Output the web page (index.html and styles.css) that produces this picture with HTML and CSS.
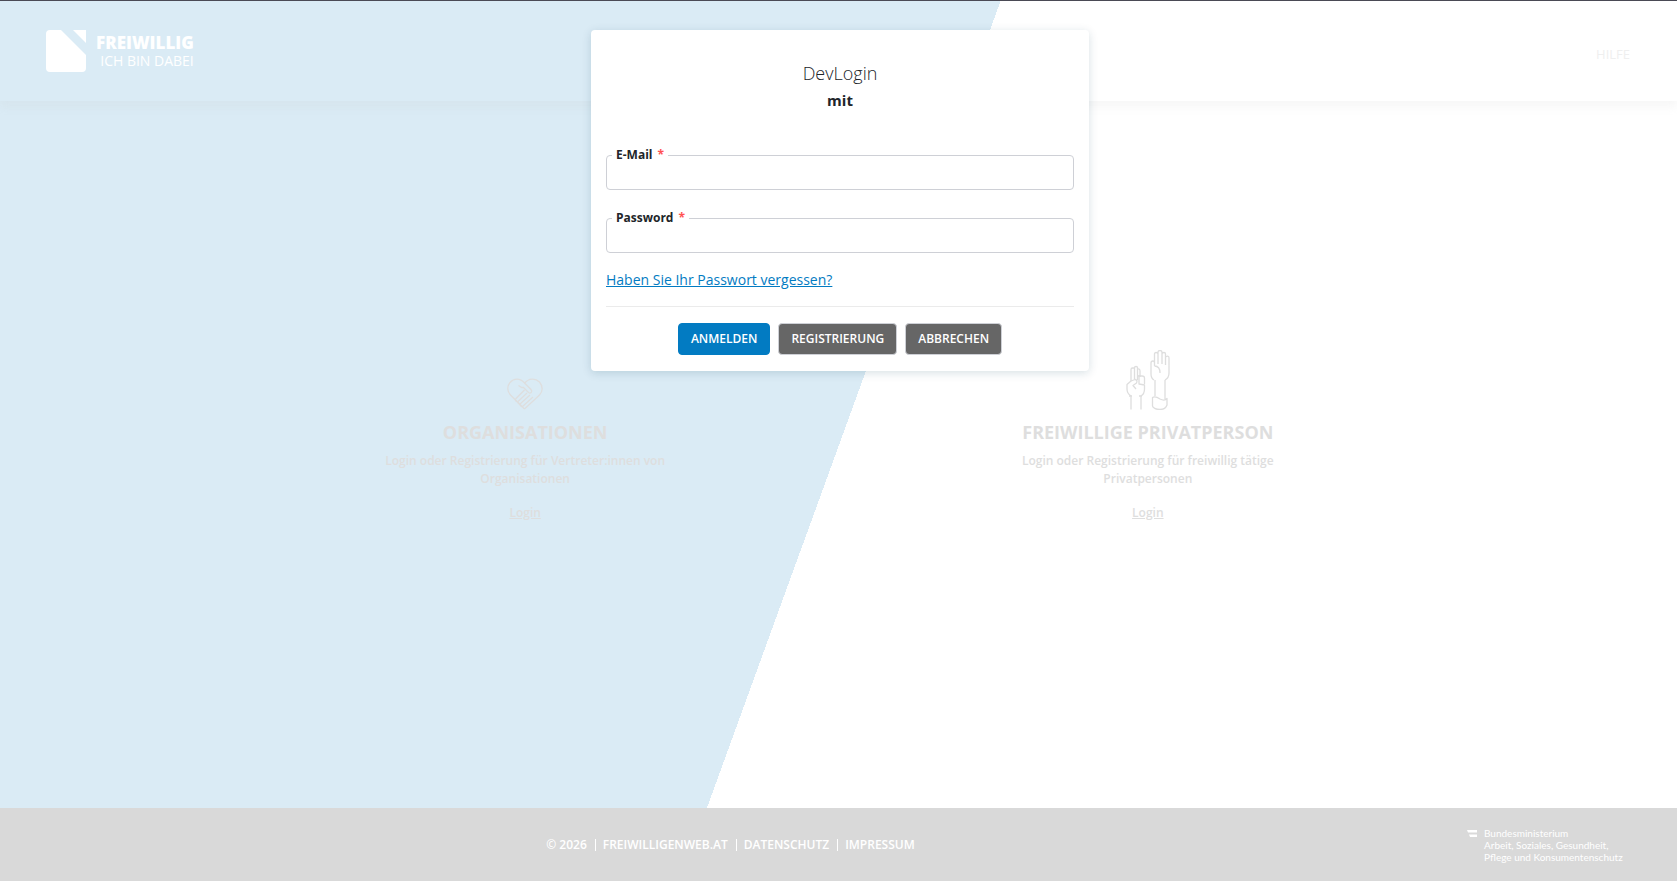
FILE: index.html
```
<!DOCTYPE html>
<html lang="de">
<head>
    <meta charset="UTF-8">
    <meta name="viewport" content="width=device-width, initial-scale=1.0">
    <title>Freiwillig - Login</title>
    <link rel="stylesheet" href="styles.css">
</head>
<body>
    <header class="header">
        <a class="logo" href="#">
            <svg class="logo-mark" width="40" height="42" viewBox="0 0 40 42" fill="#fff">
                <path d="M4 0H15L40 25V38Q40 42 36 42H4Q0 42 0 38V4Q0 0 4 0Z"/>
                <path d="M27 0H40V13Z"/>
            </svg>
            <span class="logo-text">
                <strong>FREIWILLIG</strong>
                <span>ICH BIN DABEI</span>
            </span>
        </a>
        <a class="help" href="#">HILFE</a>
    </header>

    <main class="main">
        <section class="choice">
            <svg class="choice-icon" width="36" height="32" viewBox="0 0 36 32">
                <path d="M17.500 31L3.500 17C0 13.500 0 8 3 4.500C7 0 13 0 17.500 5C22 0 28.500 0 32.500 4C36 8 36 13.500 32.500 17L17.500 31"/>
                <path d="M17.500 5L24 11.500C26 14 23.500 16 21.500 14.500L16.500 9.500L14.500 9.500L11.500 7.500"/>
                <path d="M8.500 21L17.500 12M11 23.500L20 15M13 26L23 17M15.500 28.500L26 19M8.500 21C8 22.500 9.500 24 11 23.500C11 25 12 26 13 26C13 27.500 14 28.500 15.500 28.500"/>
            </svg>
            <h2>ORGANISATIONEN</h2>
            <p>Login oder Registrierung für Vertreter:innen von Organisationen</p>
            <a href="#">Login</a>
        </section>
        <section class="choice">
            <svg class="choice-icon" width="44" height="60" viewBox="0 0 44 60">
                <path d="M5 59.500V46C2.500 44.500 1 42 1 39V34.500L5 31V19.500Q5 18 6.500 18H8.500V17.500Q8.500 16.500 10 16.500Q11.500 16.500 11.500 17.500V30"/>
                <path d="M8.500 18V29M11.500 19Q14 18.500 14 21V27M12 26H16Q18.500 26 18.500 28V34M13 25V34L18.500 35V39C18.500 42 17.500 44.500 15 46V59.500"/>
                <path d="M5 31L9 29.500Q12 30 10.500 33L7 35.500L10 39M3 46H6M13 46H16"/>
                <path d="M28 30C25.500 28.500 25 26 25 24V13Q25 11 27 11Q28.500 11 28.500 13V16M28.500 16V4Q28.500 2.500 30 2.500Q32 2.500 32 4V14M32 4V2.500Q32 .5 34 .5Q36 .5 36 2.500V14M36 4Q36 2.500 38 2.500Q39.500 2.500 39.500 4V15M39.500 7Q43 5 43 8V23C43 26 42 28.500 39 30M28.500 16C32 16 34 19 34 23"/>
                <path d="M29 30V46M39 30V49M26.500 47.500C29 46 31 47 34 49C37 50.500 39 51 41 48.500V55C40 58 37 59.500 34 59.500C30 59.500 26.500 57.500 26.500 56Z"/>
            </svg>
            <h2>FREIWILLIGE PRIVATPERSON</h2>
            <p>Login oder Registrierung für freiwillig tätige Privatpersonen</p>
            <a href="#">Login</a>
        </section>
    </main>

    <footer class="footer">
        <nav class="footer-links">
            <span>© 2026</span>
            <a href="#">FREIWILLIGENWEB.AT</a>
            <a href="#">DATENSCHUTZ</a>
            <a href="#">IMPRESSUM</a>
        </nav>
        <div class="ministry">
            <svg width="10" height="7" viewBox="0 0 10 7" fill="#fff">
                <path d="M0 0H10V2.500H1ZM2 4.500H10V7H3Z"/>
            </svg>
            <p>Bundesministerium<br>Arbeit, Soziales, Gesundheit,<br>Pflege und Konsumentenschutz</p>
        </div>
    </footer>

    <div class="overlay">
        <form class="dialog" role="dialog" aria-labelledby="dialog-title">
            <h1 id="dialog-title">DevLogin</h1>
            <p class="subtitle">mit</p>
            <div class="field">
                <label for="email">E-Mail <span class="required">*</span></label>
                <input type="email" id="email" required>
            </div>
            <div class="field">
                <label for="password">Password <span class="required">*</span></label>
                <input type="password" id="password" required>
            </div>
            <a class="forgot" href="#">Haben Sie Ihr Passwort vergessen?</a>
            <div class="buttons">
                <button type="submit" class="primary">ANMELDEN</button>
                <button type="button">REGISTRIERUNG</button>
                <button type="button">ABBRECHEN</button>
            </div>
        </form>
    </div>
</body>
</html>
```
FILE: styles.css
```
* {
    box-sizing: border-box;
}
body {
    margin: 0;
    min-height: 100vh;
    display: flex;
    flex-direction: column;
    font-family: "Open Sans", sans-serif;
    font-size: 14px;
    color: #212529;
    border-top: 1px solid #4a4a55;
    background: linear-gradient(110deg, #daebf5 calc(50% + 2px), #fff calc(50% + 2px));
}
h1, h2, p {
    margin: 0;
}

/* header */
.header {
    display: flex;
    justify-content: space-between;
    align-items: center;
    height: 100px;
    padding: 0 47px 0 46px;
    box-shadow: 0 6px 8px rgba(200, 200, 200, 0.14);
    clip-path: inset(0 0 -20px 0);
}
.logo {
    display: flex;
    align-items: center;
    gap: 10px;
    color: #fff;
    text-decoration: none;
}
.logo-text {
    display: flex;
    flex-direction: column;
    align-items: flex-end;
    padding-top: 2px;
    font-size: 14px;
    line-height: 18px;
}
.logo-text strong {
    font-size: 17px;
    font-weight: 800;
}
.help {
    padding-top: 6px;
    font-size: 13px;
    color: #efefef;
    text-decoration: none;
}

/* the two login choices */
.main {
    flex: 1;
    display: grid;
    grid-template-columns: 1fr 1fr;
    align-items: end;
    width: 74.5%;
    margin: 0 auto;
    padding: 0 4px 286px 0;
}
.choice {
    display: flex;
    flex-direction: column;
    align-items: center;
    width: 300px;
    margin: 0 auto;
    text-align: center;
    font-size: 12px;
    font-weight: 600;
    line-height: 18px;
    color: #dedede;
}
.choice-icon {
    fill: none;
    stroke: #dedede;
    stroke-width: 1.3;
    stroke-linejoin: round;
}
.choice h2 {
    margin: 10px 0 8px;
    font-size: 18px;
    line-height: 24px;
    white-space: nowrap;
}
.choice a {
    margin-top: 16px;
    color: inherit;
}

/* footer */
.footer {
    display: flex;
    align-items: center;
    height: 73px;
    background: #d9d9d9;
    color: #fff;
}
.footer-links {
    flex: 1;
    display: flex;
    justify-content: center;
    font-size: 12px;
    line-height: 12px;
    font-weight: 600;
}
.footer-links a {
    margin-left: 8px;
    padding-left: 7px;
    border-left: 1px solid #fff;
    color: inherit;
    text-decoration: none;
}
.ministry {
    display: flex;
    gap: 7px;
    width: 216px;
    padding-left: 6px;
    font-family: Lato, sans-serif;
    font-size: 10px;
    line-height: 12px;
}
.ministry svg {
    margin-top: 3px;
}

/* login dialog */
.overlay {
    position: absolute;
    top: 0;
    left: 0;
    right: 0;
    padding: 30px 16px 30px 19px;
}
.dialog {
    display: flex;
    flex-direction: column;
    max-width: 498px;
    margin: 0 auto;
    padding: 30px 15px 16px;
    background: #fff;
    border-radius: 4px;
    box-shadow: 0 2px 10px rgba(0, 60, 90, 0.16);
}
.dialog h1 {
    font-size: 18px;
    font-weight: 300;
    line-height: 27px;
    text-align: center;
}
.subtitle {
    margin-bottom: 42px;
    font-size: 15px;
    font-weight: 700;
    line-height: 26px;
    text-align: center;
}
.field {
    position: relative;
    margin-bottom: 28px;
}
.field label {
    position: absolute;
    top: -8px;
    left: 6px;
    padding: 0 4px;
    background: #fff;
    font-size: 12px;
    font-weight: 700;
    line-height: 16px;
}
.required {
    margin-left: 2px;
    color: #ff5252;
}
.field input {
    display: block;
    width: 100%;
    height: 35px;
    padding: 0 10px;
    border: 1px solid #ced0d6;
    border-radius: 4px;
    font: inherit;
}
.forgot {
    align-self: flex-start;
    margin-top: -11px;
    line-height: 20px;
    color: #027bc2;
}
.buttons {
    display: flex;
    justify-content: center;
    align-items: center;
    gap: 8px;
    margin-top: 16px;
    padding-top: 16px;
    border-top: 1px solid #ebebeb;
}
.buttons button {
    height: 32px;
    padding: 0 12px 2px;
    border: 1px solid #ced0d6;
    border-radius: 4px;
    background: #666;
    color: #fff;
    font-family: inherit;
    font-size: 12px;
    font-weight: 600;
    cursor: pointer;
}
.buttons .primary {
    border-color: #027bc2;
    background: #027bc2;
}
```
